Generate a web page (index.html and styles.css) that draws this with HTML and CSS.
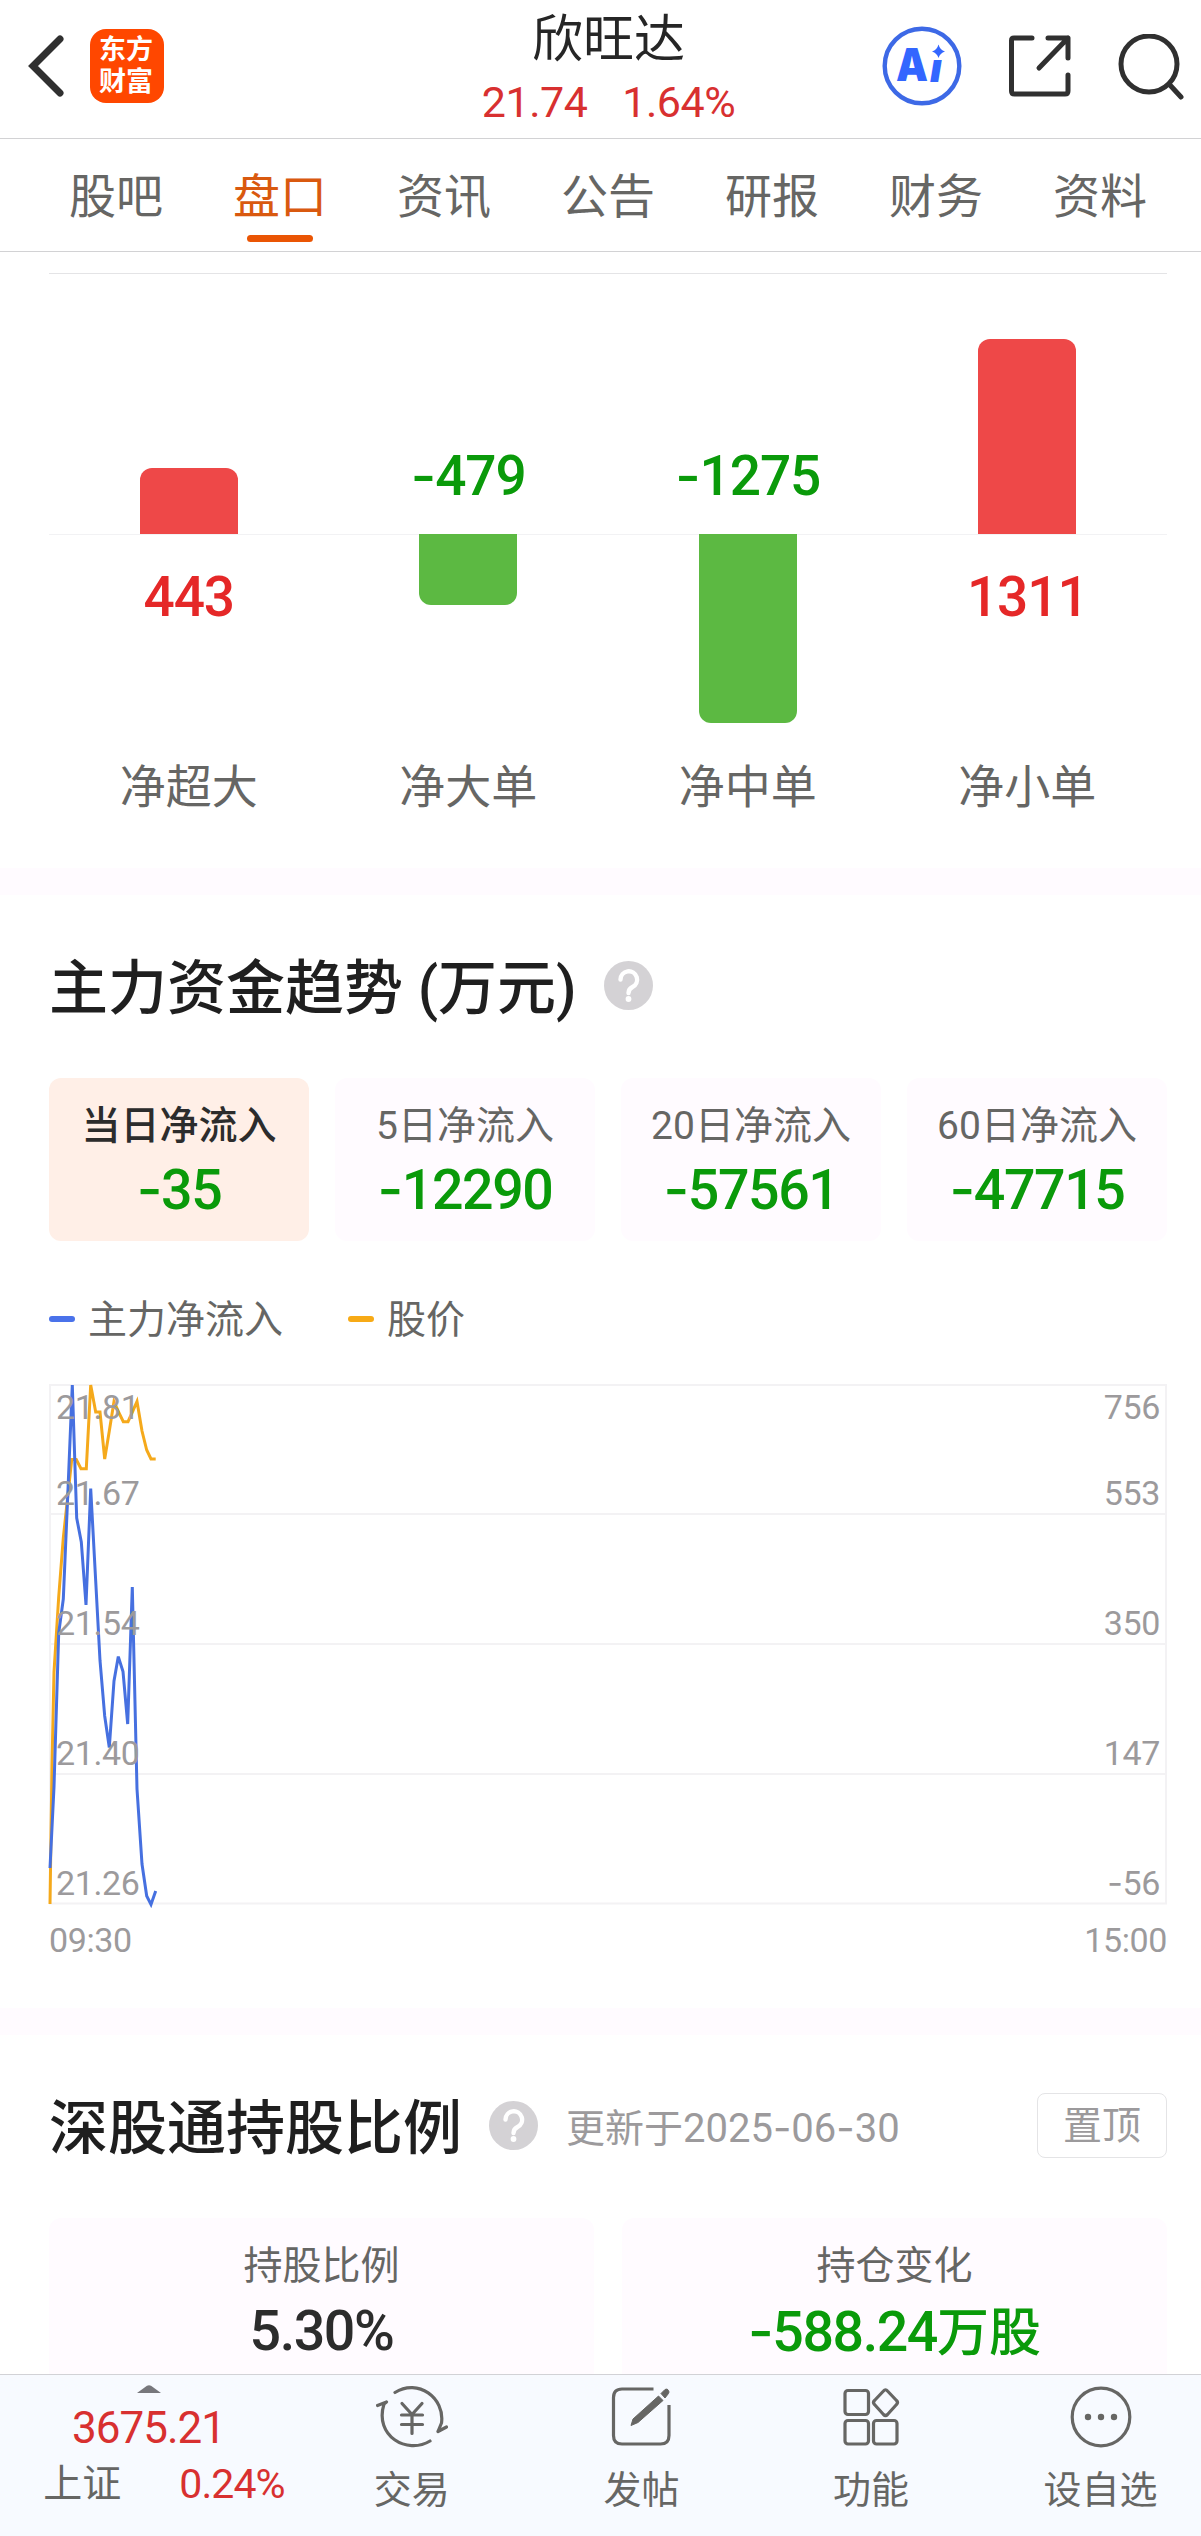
FILE: index.html
```html
<!DOCTYPE html>
<html lang="zh-CN">
<head>
<meta charset="utf-8">
<title>欣旺达</title>
<link rel="stylesheet" href="styles.css">
</head>
<body>
<div class="app">
  <header class="topbar">
    <div class="topbar-left">
      <svg class="back" width="36" height="62" viewBox="0 0 36 62"><path d="M32 4 5 31 32 58" fill="none" stroke="#303030" stroke-width="7" stroke-linecap="round" stroke-linejoin="miter"/></svg>
      <div class="logo"><span>东方</span><span>财富</span></div>
    </div>
    <div class="stock">
      <div class="stock-name">欣旺达</div>
      <div class="stock-price"><span>21.74</span><span>1.64%</span></div>
    </div>
    <div class="topbar-right">
      <svg width="80" height="80" viewBox="0 0 80 80">
        <circle cx="40" cy="40" r="37.3" fill="none" stroke="#3d69e6" stroke-width="4.4"/>
        <text class="ai" x="14" y="55" textLength="32" lengthAdjust="spacingAndGlyphs">A</text>
        <text class="ai ai-i" x="48" y="56">ı</text>
        <path d="M56.500 18.500q1.500 5.500 6.500 7-5 1.500-6.500 6.500-1.500-5-6.500-6.500 5-1.500 6.500-7z" fill="#3366ff"/>
      </svg>
      <svg width="64" height="64" viewBox="0 0 64 64" fill="none" stroke="#303030" stroke-width="5" stroke-linecap="round" stroke-linejoin="round">
        <path d="M24 4H6Q3.500 4 3.500 6.500V57Q3.500 60 6.500 60H57Q60 60 60 57V41"/>
        <path d="M40 4H60V24M60 4 31 34"/>
      </svg>
      <svg width="66" height="66" viewBox="0 0 66 66" fill="none" stroke="#303030" stroke-width="5" stroke-linecap="round">
        <circle cx="31" cy="30" r="28"/><path d="M51 50 63 63"/>
      </svg>
    </div>
  </header>

  <nav class="tabs">
    <span>股吧</span><span class="active">盘口</span><span>资讯</span><span>公告</span><span>研报</span><span>财务</span><span>资料</span>
  </nav>

  <section class="orders">
    <div class="bars">
      <div class="col">
        <div class="up"><i class="bar red" style="height:66px"></i></div>
        <div class="down"><b class="val red-t">443</b></div>
        <span class="name">净超大</span>
      </div>
      <div class="col">
        <div class="up"><b class="val green-t"><span class="dash">-</span>479</b></div>
        <div class="down"><i class="bar green" style="height:71px"></i></div>
        <span class="name">净大单</span>
      </div>
      <div class="col">
        <div class="up"><b class="val green-t"><span class="dash">-</span>1275</b></div>
        <div class="down"><i class="bar green" style="height:189px"></i></div>
        <span class="name">净中单</span>
      </div>
      <div class="col">
        <div class="up"><i class="bar red" style="height:195px"></i></div>
        <div class="down"><b class="val red-t">1311</b></div>
        <span class="name">净小单</span>
      </div>
    </div>
  </section>

  <section class="trend">
    <div class="heading">
      <h2>主力资金趋势 (万元)</h2>
      <svg class="help" width="49" height="49" viewBox="0 0 49 49"><circle cx="24.500" cy="24.500" r="24.500" fill="#d4d2d5"/><path d="M16.500 18.500a8.300 8.300 0 1 1 12 7.500c-3 1.600-4 3-4 6" fill="none" stroke="#fff" stroke-width="4.400" stroke-linecap="round"/><circle cx="24.500" cy="38" r="2.900" fill="#fff"/></svg>
    </div>
    <div class="cards four">
      <div class="card on"><span>当日净流入</span><b class="green-t"><span class="dash">-</span>35</b></div>
      <div class="card"><span>5日净流入</span><b class="green-t"><span class="dash">-</span>12290</b></div>
      <div class="card"><span>20日净流入</span><b class="green-t"><span class="dash">-</span>57561</b></div>
      <div class="card"><span>60日净流入</span><b class="green-t"><span class="dash">-</span>47715</b></div>
    </div>
    <div class="legend">
      <span class="key"><i class="blue"></i><span>主力净流入</span></span>
      <span class="key"><i class="amber"></i><span>股价</span></span>
    </div>
    <svg class="chart" width="1118" height="580" viewBox="0 0 1118 580">
      <g fill="none" stroke="#f3f2f4" stroke-width="2">
        <path d="M1 0V519M1117 0V519M0 0H1118M0 129H1118M0 259H1118M0 389H1118M0 518.500H1118"/>
      </g>
      <polyline fill="none" stroke="#f5a91b" stroke-width="3" points="1,519 2,450 3,380 5,287 9.700,212 14.300,153 22.700,74.600 27.300,74.600 32,83.700 37.300,83.700 41.700,0 46.700,27 51,27 55.700,74 60.300,46 65,16.500 69.300,26.400 74.300,36.700 79,36.700 83.700,26.400 88,16.500 93,46 97.700,65 102,74 106.700,74"/>
      <polyline fill="none" stroke="#4670e0" stroke-width="3" points="1,483 5,402 9.700,248 14.300,214 18.300,121 23.300,0 27.700,133 32.300,157 37,220 41.700,103.500 46.700,196 51,275.500 55.700,331 60.300,362.500 65,296 69.300,271.600 74,286.600 78.700,339 83.300,202 88,404 93,479 97.700,511 102,519.500 106.700,506"/>
      <g class="axis">
        <text x="7" y="34">21.81</text><text x="7" y="120">21.67</text><text x="7" y="250">21.54</text><text x="7" y="380">21.40</text><text x="7" y="510">21.26</text>
        <text x="0" y="567">09:30</text>
      </g>
      <g class="axis end">
        <text x="1111" y="34">756</text><text x="1111" y="120">553</text><text x="1111" y="250">350</text><text x="1111" y="380">147</text><text x="1111" y="510"><tspan class="dash">-</tspan>56</text>
        <text x="1118" y="567">15:00</text>
      </g>
    </svg>
  </section>

  <section class="holding">
    <div class="heading">
      <h2>深股通持股比例</h2>
      <svg class="help" width="49" height="49" viewBox="0 0 49 49"><circle cx="24.500" cy="24.500" r="24.500" fill="#d4d2d5"/><path d="M16.500 18.500a8.300 8.300 0 1 1 12 7.500c-3 1.600-4 3-4 6" fill="none" stroke="#fff" stroke-width="4.400" stroke-linecap="round"/><circle cx="24.500" cy="38" r="2.900" fill="#fff"/></svg>
      <span class="updated">更新于<span class="date">2025<span class="dash">-</span>06<span class="dash">-</span>30</span></span>
      <span class="pin">置顶</span>
    </div>
    <div class="cards two">
      <div class="card"><span>持股比例</span><b>5.30%</b></div>
      <div class="card"><span>持仓变化</span><b class="green-t"><span class="dash">-</span>588.24<em>万股</em></b></div>
    </div>
  </section>

  <footer class="dock">
    <div class="index">
      <svg width="24" height="8" viewBox="0 0 24 8"><path d="M0 8 10 .8Q12-.5 14 .8L24 8z" fill="#77777c"/></svg>
      <div class="index-value">3675.21</div>
      <div class="index-row"><span>上证</span><span class="pct">0.24%</span></div>
    </div>
    <div class="item">
      <svg width="72" height="64" viewBox="0 0 72 64" fill="none" stroke="#666664" stroke-width="3.200" stroke-linecap="round" stroke-linejoin="round">
        <path d="M19 8.500C42-6 69 14 65.500 39M65.500 39 62 47.500M62 47.500 70.500 43M54 57C31 71-2 52 8 20M8 20 10.500 18 1.500 21.500"/>
        <path d="M26 19.500 36 30.500 46 19.500M36 30.500V49.500M25.500 31H46.500M25.500 40.500H46.500"/>
      </svg>
      <span>交易</span>
    </div>
    <div class="item">
      <svg width="60" height="64" viewBox="0 0 60 64" fill="none" stroke="#666664" stroke-width="3.200">
        <path d="M42.500 5H11Q2.500 5 2.500 13.500V51.500Q2.500 60 11 60H49.500Q58 60 58 51.500V21"/>
        <path d="M20 41.500 22 35 47.500 12 52 16.500 27 38.500zM50 9.500 54 5.500Q56.500 4 57.500 6.500 58.500 8 57.500 9.500L54 14z" fill="#666664" stroke-width="1"/>
      </svg>
      <span>发帖</span>
    </div>
    <div class="item">
      <svg width="58" height="64" viewBox="0 0 58 64" fill="none" stroke="#666664" stroke-width="3.200" stroke-linejoin="round">
        <rect x="3" y="6.500" width="23.500" height="24" rx="3"/><rect x="3" y="36.500" width="23.500" height="23.500" rx="3"/><rect x="31.500" y="36.500" width="23.500" height="23.500" rx="3"/>
        <path d="M41.500 7Q43.500 4.500 45.500 7L54.500 16.500Q56.500 18.500 54.500 20.500L45.500 30.500Q43.500 32.500 41.500 30.500L32.500 20.500Q30.500 18.500 32.500 16.500z"/>
      </svg>
      <span>功能</span>
    </div>
    <div class="item">
      <svg width="62" height="64" viewBox="0 0 62 64"><circle cx="31" cy="33" r="28.800" fill="none" stroke="#666664" stroke-width="3.200"/><g fill="#666664"><circle cx="18" cy="33" r="3.200"/><circle cx="31" cy="33" r="3.200"/><circle cx="44" cy="33" r="3.200"/></g></svg>
      <span>设自选</span>
    </div>
  </footer>
</div>
</body>
</html>
```

FILE: styles.css
```css
* { box-sizing: border-box; }
body { margin: 0; background: #fff; }
h2, b, i, em { margin: 0; font-style: normal; font-weight: inherit; }
svg { display: block; flex: none; }

.app {
  width: 1201px;
  height: 2536px;
  overflow: hidden;
  display: flex;
  flex-direction: column;
  background: #fff;
  color: #666664;
  font-family: Roboto, "Noto Sans CJK SC", sans-serif;
  white-space: nowrap;
}
.red-t { color: #e52828; }
.green-t { color: #0a9a0a; }
.dash { font-family: Inter, sans-serif; }

/* header */
.topbar {
  height: 139px;
  flex: none;
  display: grid;
  grid-template-columns: 400px 1fr 400px;
  border-bottom: 1px solid #d2d2d4;
}
.topbar-left { display: flex; align-items: flex-start; padding: 29px 0 0 28px; gap: 26px; }
.back { margin-top: 6px; }
.logo {
  width: 74px;
  height: 74px;
  border-radius: 16px;
  background: #ff4700;
  color: #fff;
  font: 700 27px/32px "Liberation Sans", "Noto Sans CJK SC", sans-serif;
  padding: 5px 0 0 9px;
}
.logo span { display: block; }
.stock { text-align: center; padding-left: 16px; }
.stock-name { height: 77px; line-height: 79px; font-size: 51px; color: #262626; }
.stock-price { height: 50px; line-height: 50px; font-size: 43px; color: #d83030; display: flex; justify-content: center; gap: 35px; letter-spacing: -.5px; }
.topbar-right { display: flex; justify-content: flex-end; align-items: flex-start; padding: 26px 17px 0 0; gap: 46px; }
.topbar-right svg + svg { margin-top: 8px; }
.ai { font: 900 46px Inter, sans-serif; fill: #3366ff; }
.ai-i { font-size: 40px; font-style: italic; }

/* tabs */
.tabs {
  height: 113px;
  flex: none;
  display: grid;
  grid-template-columns: repeat(7, 164px);
  padding-left: 34px;
  border-bottom: 1px solid #d2d2d4;
  font-size: 47px;
  line-height: 115px;
  text-align: center;
}
.active {
  color: #d9590f;
  display: flex;
  flex-direction: column;
  align-items: center;
  height: 112px;
}
.active::after { content: ""; width: 66px; height: 7px; border-radius: 4px; background: #ea5504; margin-top: -19px; }

/* order size bars */
.orders { height: 616px; flex: none; padding: 21px 34px 0 49px; }
.bars {
  width: 1118px;
  display: grid;
  grid-template-columns: repeat(4, 1fr);
  border-top: 1px solid #e4e4e6;
}
.col { display: flex; flex-direction: column; align-items: center; }
.up { height: 261px; width: 100%; display: flex; flex-direction: column; align-items: center; justify-content: flex-end; border-bottom: 1px solid #f2f2f4; }
.down { height: 217px; display: flex; flex-direction: column; align-items: center; }
.bar { width: 98px; }
.bar.red { background: #ee4848; border-radius: 12px 12px 0 0; }
.bar.green { background: #5cb942; border-radius: 0 0 12px 12px; margin-top: -1px; }
.val { font-size: 55px; line-height: 60px; font-weight: 500; letter-spacing: -1.1px; }
.up .val { margin-bottom: 28px; }
.down .val { margin-top: 32px; }
.name { font-size: 46px; line-height: 70px; }

/* sections */
.trend, .holding { border-top: 27px solid #fffbff; flex: none; padding: 0 34px 0 49px; }
.trend { height: 1140px; }
.heading { display: flex; align-items: center; height: 183px; }
.heading h2 { font-size: 59px; line-height: 80px; font-weight: 500; color: #1f1f1f; padding-top: 4px; }
.help { margin: 0 0 3px 27px; }
.cards { display: grid; }
.four { grid-template-columns: repeat(4, 260px); gap: 26px; }
.two { grid-template-columns: repeat(2, 545px); gap: 28px; }
.card {
  height: 163px;
  border-radius: 12px;
  background: #fffbff;
  display: flex;
  flex-direction: column;
  align-items: center;
  padding-top: 19px;
}
.card > span { font-size: 39px; line-height: 58px; }
.card b { font-size: 55.500px; line-height: 67px; font-weight: 500; letter-spacing: -1.4px; }
.card.on { background: #ffefe7; }
.card.on > span { font-weight: 500; color: #2c2c2c; }
.legend { display: flex; gap: 65px; height: 144px; align-items: center; font-size: 39px; padding-top: 12px; }
.key { display: flex; align-items: center; gap: 13px; }
.key span { margin-top: -6px; }
.key i { width: 26px; height: 6px; border-radius: 3px; }
.blue { background: #4a72ea; }
.amber { background: #f7aa16; }
.chart { overflow: visible; }
.axis { font-size: 34px; letter-spacing: -.4px; fill: #9c9a9c; }
.end { text-anchor: end; }

.holding { height: 366px; }
.holding .card { height: 200px; }
.holding .card b { color: #2c2c2c; line-height: 73px; }
.holding .card .green-t { color: #0a9a0a; line-height: 71px; }
.holding em { font-size: 52px; letter-spacing: 0; }
.updated { font-size: 39px; color: #9c9a9c; margin: 0 0 4px 28px; }
.date { font-size: 40px; }
.pin {
  margin-left: auto;
  width: 130px;
  height: 65px;
  line-height: 65px;
  border: 1px solid #e4e4e6;
  border-radius: 8px;
  text-align: center;
  font-size: 39px;
  color: #9c9a9c;
  margin-bottom: 2px;
}

/* bottom dock */
.dock {
  height: 162px;
  flex: none;
  display: grid;
  grid-template-columns: 297px repeat(4, 229.600px);
  border-top: 1px solid #d2d2d6;
  background: #f7faff;
}
.index { display: flex; flex-direction: column; align-items: center; padding-top: 10px; }
.index-value { font-size: 44px; line-height: 71px; letter-spacing: -1px; color: #d83030; }
.index-row { display: flex; gap: 58px; font-size: 39px; line-height: 40px; margin-left: 31px; }
.pct { font-size: 41px; letter-spacing: -.9px; color: #d83030; }
.item { display: flex; flex-direction: column; align-items: center; padding-top: 9px; font-size: 38px; }
.item span { line-height: 62px; margin-top: 11px; }
```
